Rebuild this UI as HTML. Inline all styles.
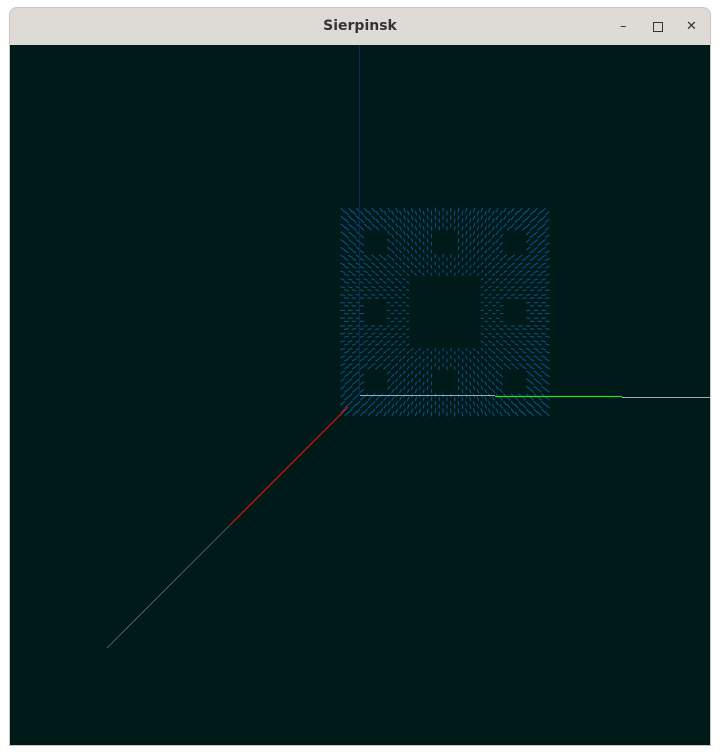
<!DOCTYPE html>
<html><head><meta charset="utf-8"><style>
html,body{margin:0;padding:0;width:720px;height:755px;background:#fff;overflow:hidden}
.win{position:absolute;left:9px;top:7px;width:702px;height:739px;border-radius:8px 8px 0 0;background:#dedbd7;border:1px solid #c8c5c1;box-sizing:border-box;overflow:hidden}
.title{position:absolute;left:0;top:0;width:100%;height:37px;text-align:center;font:bold 14px "DejaVu Sans","Liberation Sans",sans-serif;line-height:37px;color:#333}
.btn{position:absolute;top:0;font:13px "DejaVu Sans",sans-serif;line-height:37px;color:#333}
svg{position:absolute;left:10px;top:45px}
</style></head><body>
<div class="win">
<div class="title">Sierpinsk</div>
<div class="btn" style="left:610px">–</div>
<div class="btn" style="left:643px;top:14px;width:8px;height:8px;border:1px solid #333;line-height:0"></div>
<div class="btn" style="left:676px">✕</div>
</div>
<svg id="s" width="700" height="700" viewBox="10 45 700 700">
<rect x="10" y="45" width="700" height="700" fill="#001a1a"/>
<g id="g" stroke="#0b5592" stroke-width="1"></g>
<line x1="359.5" y1="45" x2="359.5" y2="395" stroke="#102a50" stroke-width="1"/>
<line x1="360" y1="395.5" x2="495" y2="395.5" stroke="#9ab" stroke-width="1"/>
<line x1="495" y1="396.5" x2="622" y2="396.5" stroke="#22dd22" stroke-width="1.2"/>
<line x1="622" y1="397.5" x2="710" y2="397.5" stroke="#aab" stroke-width="1"/>
<line x1="348" y1="407" x2="230" y2="525" stroke="#e01010" stroke-width="1.2"/>
<line x1="230" y1="525" x2="107" y2="648" stroke="#667" stroke-width="0.8"/>
</svg>
<script>
var g=document.getElementById('g'),h='';
var x0=343,y0=210,S=204,N=27,c=S/N,cx=444,cy=312;
function hole(i,j){for(var lvl=0;lvl<3;lvl++){if(lvl>=1&&i%3==1&&j%3==1)return true;i=Math.floor(i/3);j=Math.floor(j/3);}return false;}
for(var i=0;i<N;i++)for(var j=0;j<N;j++){if(hole(i,j))continue;
for(var k=0;k<2;k++){var px=x0+(i+0.25+k*0.5)*c,py=y0+(j+0.3+k*0.4)*c;
var dx=px-cx,dy=py-cy,d=Math.sqrt(dx*dx+dy*dy)||1,L=2+4*d/150;
h+='<line x1="'+px.toFixed(1)+'" y1="'+py.toFixed(1)+'" x2="'+(px+dx/d*L).toFixed(1)+'" y2="'+(py+dy/d*L).toFixed(1)+'"/>';}}
g.innerHTML=h;
</script>
</body></html>
